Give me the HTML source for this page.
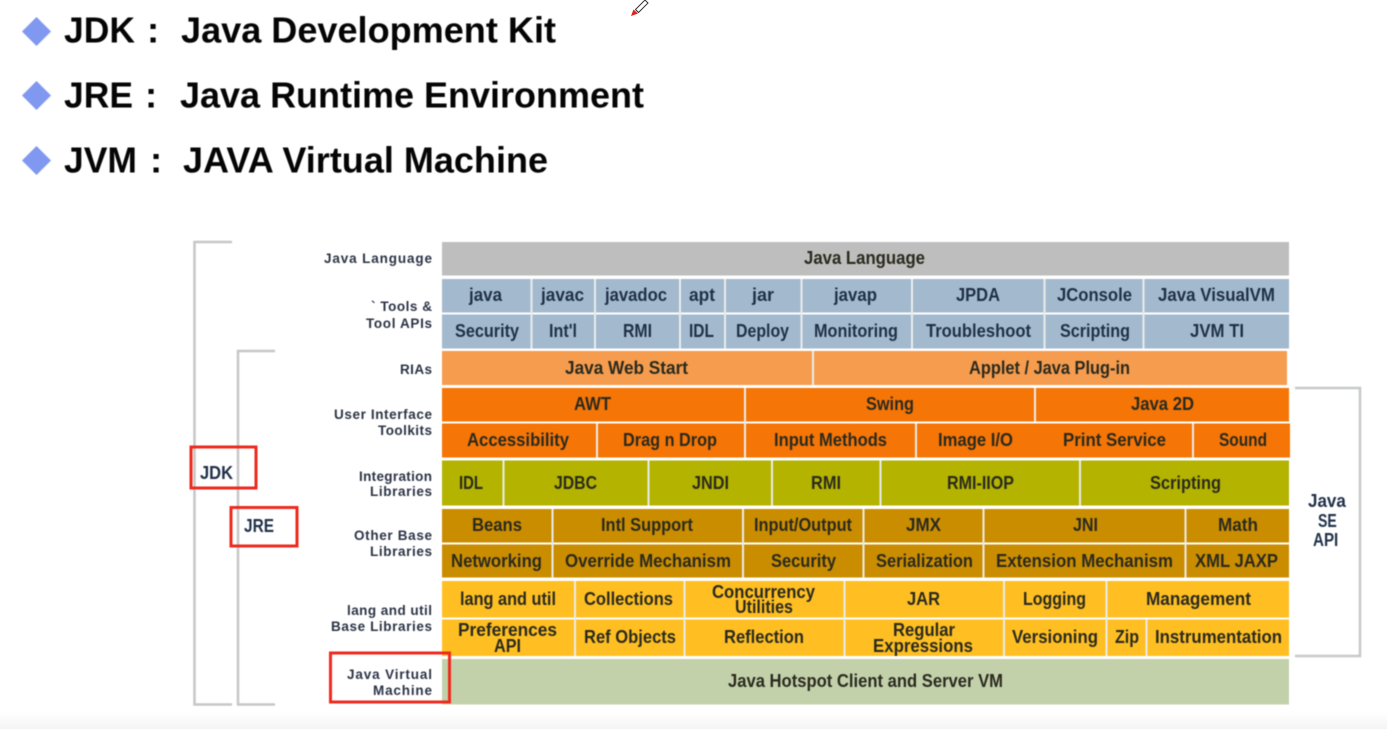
<!DOCTYPE html>
<html><head><meta charset="utf-8">
<style>
html,body{margin:0;padding:0;background:#fff;width:1387px;height:729px;overflow:hidden}
svg{position:absolute;left:0;top:0;display:block}
text{font-family:"Liberation Sans",sans-serif}
.h{font-size:36.5px;font-weight:bold;fill:#050505}
.c{font-size:18.5px;font-weight:bold;fill:#2a2a1e;stroke:none}
.b{fill:#1f3048}
.l{font-size:13.5px;font-weight:bold;fill:#2b3345}
.d{stroke:#e9ecec;stroke-width:2;fill:none}
</style></head><body>
<svg width="1387" height="729" viewBox="0 0 1387 729" xmlns="http://www.w3.org/2000/svg">
<defs><linearGradient id="g" x1="0" y1="0" x2="0" y2="1"><stop offset="0" stop-color="#fff"/><stop offset="1" stop-color="#f4f4f4"/></linearGradient></defs>
<rect x="0" y="712" width="1387" height="17" fill="url(#g)"/>

<g style="filter:blur(.4px)">
<polygon points="36.5,17 51,31.5 36.5,46 22,31.5" fill="#8098f0"/>
<polygon points="36.5,81 51,95.5 36.5,110 22,95.5" fill="#8098f0"/>
<polygon points="36.5,146 51,160.5 36.5,175 22,160.5" fill="#8098f0"/>
<text class="h" x="64" y="42.7" textLength="71" lengthAdjust="spacingAndGlyphs">JDK</text>
<text class="h" x="147" y="42.7">:</text>
<text class="h" x="181" y="42.7" textLength="375" lengthAdjust="spacingAndGlyphs">Java Development Kit</text>
<text class="h" x="64" y="107.3" textLength="69" lengthAdjust="spacingAndGlyphs">JRE</text>
<text class="h" x="145" y="107.3">:</text>
<text class="h" x="180" y="107.3" textLength="464" lengthAdjust="spacingAndGlyphs">Java Runtime Environment</text>
<text class="h" x="64" y="172.3" textLength="73" lengthAdjust="spacingAndGlyphs">JVM</text>
<text class="h" x="150" y="172.3">:</text>
<text class="h" x="183" y="172.3" textLength="365" lengthAdjust="spacingAndGlyphs">JAVA Virtual Machine</text>
</g>

<!-- pencil -->
<path d="M635.5 9.5 L645 0 L648 3 L638.5 12.5 Z" stroke="#333" stroke-width="1" fill="#fff"/>
<path d="M631 16 L633.5 9.5 L638 13.5 Z" fill="#e0201c"/>

<g style="filter:blur(.6px)">
<!-- colored rows -->
<rect x="442" y="242" width="847" height="33.5" fill="#bebebe"/>
<rect x="442" y="279" width="847" height="33.5" fill="#a3bace"/>
<rect x="442" y="314.5" width="847" height="34" fill="#a3bace"/>
<rect x="442" y="351" width="845" height="34" fill="#f59c4e"/>
<rect x="442" y="388" width="847" height="33.5" fill="#f57506"/>
<rect x="442" y="423.5" width="848" height="34" fill="#f57506"/>
<rect x="442" y="460.5" width="847" height="45" fill="#b3b300"/>
<rect x="442" y="509" width="847" height="33.5" fill="#cb8d00"/>
<rect x="442" y="544.5" width="847" height="33" fill="#cb8d00"/>
<rect x="442" y="581" width="847" height="36.5" fill="#ffbf23"/>
<rect x="442" y="619.5" width="847" height="36.5" fill="#ffbf23"/>
<rect x="442" y="659" width="847" height="45.5" fill="#c3d1ab"/>

<!-- dividers -->
<path class="d" d="M531.5 279V348.5M595 279V348.5M680 279V348.5M725 279V348.5M801.5 279V348.5M912 279V348.5M1044.5 279V348.5M1143.5 279V348.5
M813 351V385
M745 388V457.5M1035 388V421.5M597 423.5V457.5M916 423.5V457.5M1193 423.5V457.5
M503.5 460.5V505.5M648.5 460.5V505.5M772 460.5V505.5M880.5 460.5V505.5M1080 460.5V505.5
M552.5 509V577.5M743 509V577.5M863.5 509V577.5M983.5 509V577.5M1185.5 509V577.5
M575 581V656M684.5 581V656M844.5 581V656M1004 581V656M1106.5 581V656M1146.5 619.5V656"/>

<!-- brackets -->
<path d="M232 242H194.5V704.5H232" fill="none" stroke="#c6c6c6" stroke-width="2.5"/>
<path d="M275 351H238V704.5H275" fill="none" stroke="#c6c6c6" stroke-width="2.5"/>
<path d="M1295 388H1360V656H1295" fill="none" stroke="#c6c8c8" stroke-width="2.5"/>

<!-- cell text -->
<g class="c">
<text x="804" y="264" textLength="121" lengthAdjust="spacingAndGlyphs">Java Language</text>
<g class="b">
<text x="469" y="301" textLength="33" lengthAdjust="spacingAndGlyphs">java</text>
<text x="541" y="301" textLength="43" lengthAdjust="spacingAndGlyphs">javac</text>
<text x="605" y="301" textLength="62" lengthAdjust="spacingAndGlyphs">javadoc</text>
<text x="689" y="301" textLength="26" lengthAdjust="spacingAndGlyphs">apt</text>
<text x="752" y="301" textLength="22" lengthAdjust="spacingAndGlyphs">jar</text>
<text x="834" y="301" textLength="43" lengthAdjust="spacingAndGlyphs">javap</text>
<text x="956" y="301" textLength="44" lengthAdjust="spacingAndGlyphs">JPDA</text>
<text x="1057" y="301" textLength="75" lengthAdjust="spacingAndGlyphs">JConsole</text>
<text x="1158" y="301" textLength="117" lengthAdjust="spacingAndGlyphs">Java VisualVM</text>
<text x="455" y="337" textLength="64" lengthAdjust="spacingAndGlyphs">Security</text>
<text x="549" y="337" textLength="28" lengthAdjust="spacingAndGlyphs">Int'l</text>
<text x="623" y="337" textLength="29" lengthAdjust="spacingAndGlyphs">RMI</text>
<text x="689" y="337" textLength="25" lengthAdjust="spacingAndGlyphs">IDL</text>
<text x="736" y="337" textLength="53" lengthAdjust="spacingAndGlyphs">Deploy</text>
<text x="814" y="337" textLength="84" lengthAdjust="spacingAndGlyphs">Monitoring</text>
<text x="926" y="337" textLength="105" lengthAdjust="spacingAndGlyphs">Troubleshoot</text>
<text x="1060" y="337" textLength="70" lengthAdjust="spacingAndGlyphs">Scripting</text>
<text x="1190" y="337" textLength="54" lengthAdjust="spacingAndGlyphs">JVM TI</text>
</g>
<text x="565" y="374" textLength="123" lengthAdjust="spacingAndGlyphs">Java Web Start</text>
<text x="969" y="374" textLength="161" lengthAdjust="spacingAndGlyphs">Applet / Java Plug-in</text>
<text x="574" y="410" textLength="37" lengthAdjust="spacingAndGlyphs">AWT</text>
<text x="866" y="410" textLength="48" lengthAdjust="spacingAndGlyphs">Swing</text>
<text x="1131" y="410" textLength="63" lengthAdjust="spacingAndGlyphs">Java 2D</text>
<text x="467" y="446" textLength="102" lengthAdjust="spacingAndGlyphs">Accessibility</text>
<text x="623" y="446" textLength="94" lengthAdjust="spacingAndGlyphs">Drag n Drop</text>
<text x="774" y="446" textLength="113" lengthAdjust="spacingAndGlyphs">Input Methods</text>
<text x="938" y="446" textLength="75" lengthAdjust="spacingAndGlyphs">Image I/O</text>
<text x="1063" y="446" textLength="103" lengthAdjust="spacingAndGlyphs">Print Service</text>
<text x="1219" y="446" textLength="48" lengthAdjust="spacingAndGlyphs">Sound</text>
<text x="459" y="489" textLength="24" lengthAdjust="spacingAndGlyphs">IDL</text>
<text x="554" y="489" textLength="43" lengthAdjust="spacingAndGlyphs">JDBC</text>
<text x="692" y="489" textLength="37" lengthAdjust="spacingAndGlyphs">JNDI</text>
<text x="811" y="489" textLength="30" lengthAdjust="spacingAndGlyphs">RMI</text>
<text x="947" y="489" textLength="67" lengthAdjust="spacingAndGlyphs">RMI-IIOP</text>
<text x="1150" y="489" textLength="71" lengthAdjust="spacingAndGlyphs">Scripting</text>
<text x="472" y="531" textLength="50" lengthAdjust="spacingAndGlyphs">Beans</text>
<text x="601" y="531" textLength="92" lengthAdjust="spacingAndGlyphs">Intl Support</text>
<text x="754" y="531" textLength="98" lengthAdjust="spacingAndGlyphs">Input/Output</text>
<text x="906" y="531" textLength="35" lengthAdjust="spacingAndGlyphs">JMX</text>
<text x="1073" y="531" textLength="25" lengthAdjust="spacingAndGlyphs">JNI</text>
<text x="1218" y="531" textLength="40" lengthAdjust="spacingAndGlyphs">Math</text>
<text x="451" y="567" textLength="91" lengthAdjust="spacingAndGlyphs">Networking</text>
<text x="565" y="567" textLength="166" lengthAdjust="spacingAndGlyphs">Override Mechanism</text>
<text x="771" y="567" textLength="65" lengthAdjust="spacingAndGlyphs">Security</text>
<text x="876" y="567" textLength="97" lengthAdjust="spacingAndGlyphs">Serialization</text>
<text x="996" y="567" textLength="177" lengthAdjust="spacingAndGlyphs">Extension Mechanism</text>
<text x="1195" y="567" textLength="83" lengthAdjust="spacingAndGlyphs">XML JAXP</text>
<text x="460" y="605" textLength="96" lengthAdjust="spacingAndGlyphs">lang and util</text>
<text x="584" y="605" textLength="89" lengthAdjust="spacingAndGlyphs">Collections</text>
<text x="712" y="598" textLength="103" lengthAdjust="spacingAndGlyphs">Concurrency</text>
<text x="735" y="613" textLength="58" lengthAdjust="spacingAndGlyphs">Utilities</text>
<text x="907" y="605" textLength="33" lengthAdjust="spacingAndGlyphs">JAR</text>
<text x="1023" y="605" textLength="63" lengthAdjust="spacingAndGlyphs">Logging</text>
<text x="1146" y="605" textLength="105" lengthAdjust="spacingAndGlyphs">Management</text>
<text x="458" y="636" textLength="99" lengthAdjust="spacingAndGlyphs">Preferences</text>
<text x="494" y="652" textLength="27" lengthAdjust="spacingAndGlyphs">API</text>
<text x="584" y="643" textLength="92" lengthAdjust="spacingAndGlyphs">Ref Objects</text>
<text x="724" y="643" textLength="80" lengthAdjust="spacingAndGlyphs">Reflection</text>
<text x="893" y="636" textLength="62" lengthAdjust="spacingAndGlyphs">Regular</text>
<text x="873" y="652" textLength="100" lengthAdjust="spacingAndGlyphs">Expressions</text>
<text x="1012" y="643" textLength="86" lengthAdjust="spacingAndGlyphs">Versioning</text>
<text x="1115" y="643" textLength="24" lengthAdjust="spacingAndGlyphs">Zip</text>
<text x="1155" y="643" textLength="127" lengthAdjust="spacingAndGlyphs">Instrumentation</text>
<text x="728" y="687" textLength="275" lengthAdjust="spacingAndGlyphs">Java Hotspot Client and Server VM</text>
</g>

<!-- left labels -->
<g class="l">
<text x="324" y="263" textLength="108" lengthAdjust="spacing">Java Language</text>
<text x="371" y="311" textLength="61" lengthAdjust="spacing">` Tools &amp;</text>
<text x="366" y="328" textLength="66" lengthAdjust="spacing">Tool APIs</text>
<text x="400" y="374" textLength="32" lengthAdjust="spacing">RIAs</text>
<text x="334" y="419" textLength="98" lengthAdjust="spacing">User Interface</text>
<text x="378" y="435" textLength="54" lengthAdjust="spacing">Toolkits</text>
<text x="359" y="481" textLength="73" lengthAdjust="spacing">Integration</text>
<text x="370" y="496" textLength="62" lengthAdjust="spacing">Libraries</text>
<text x="354" y="540" textLength="78" lengthAdjust="spacing">Other Base</text>
<text x="370" y="556" textLength="62" lengthAdjust="spacing">Libraries</text>
<text x="347" y="615" textLength="85" lengthAdjust="spacing">lang and util</text>
<text x="331" y="631" textLength="101" lengthAdjust="spacing">Base Libraries</text>
<text x="347" y="679" textLength="85" lengthAdjust="spacing">Java Virtual</text>
<text x="373" y="695" textLength="59" lengthAdjust="spacing">Machine</text>
</g>

<g class="c b">
<text x="200" y="479" textLength="33" lengthAdjust="spacingAndGlyphs">JDK</text>
<text x="244" y="532" textLength="30" lengthAdjust="spacingAndGlyphs">JRE</text>
<text transform="translate(1308 507) scale(.92 1)">Java</text>
<text transform="translate(1318 527) scale(.76 1)">SE</text>
<text transform="translate(1313 546) scale(.82 1)">API</text>
</g>

<!-- red boxes -->
<g fill="none" stroke="#ee2a1e" stroke-width="3">
<rect x="191" y="447" width="65" height="41"/>
<rect x="231" y="507.5" width="66" height="38.5"/>
<rect x="330.5" y="653" width="119" height="49"/>
</g>
</g>
</svg>
</body></html>
